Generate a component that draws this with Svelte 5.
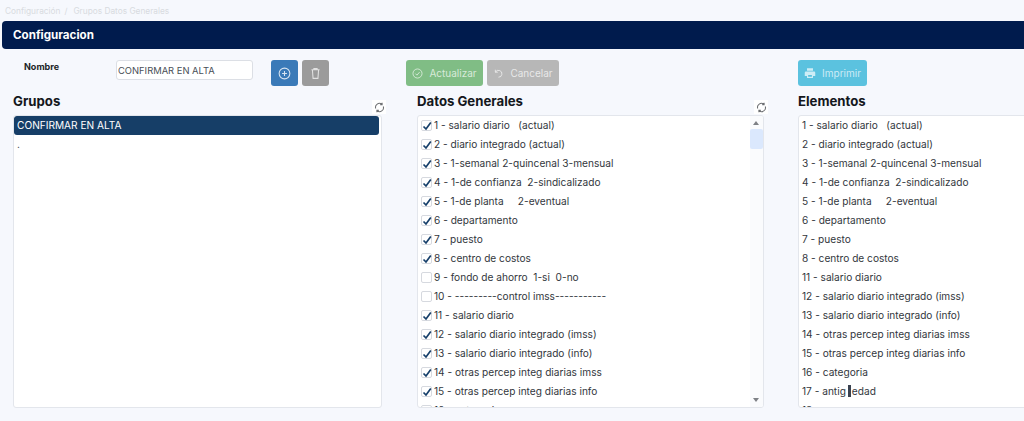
<script>
  const datos = [
    [1, 'salario diario \u00a0 (actual)', true],
    [2, 'diario integrado (actual)', true],
    [3, '1-semanal 2-quincenal 3-mensual', true],
    [4, '1-de confianza \u00a02-sindicalizado', true],
    [5, '1-de planta \u00a0 \u00a0 2-eventual', true],
    [6, 'departamento', true],
    [7, 'puesto', true],
    [8, 'centro de costos', true],
    [9, 'fondo de ahorro \u00a01-si \u00a00-no', false],
    [10, '---------control imss-----------', false],
    [11, 'salario diario', true],
    [12, 'salario diario integrado (imss)', true],
    [13, 'salario diario integrado (info)', true],
    [14, 'otras percep integ diarias imss', true],
    [15, 'otras percep integ diarias info', true],
    [16, 'categoria', false]
  ];
  const elementos = datos.filter((d) => d[2] || d[0] === 16).concat([[17, 'antig', true], [18, 'sexo', true]]);
</script>

<div class="page">
  <nav class="crumbs"><span>Configuración</span><span class="sep">/</span><span>Grupos Datos Generales</span></nav>
  <header class="bar">Configuracion</header>

  <div class="toolbar">
    <div class="form">
      <label class="name" for="nombre">Nombre</label>
      <input id="nombre" value="CONFIRMAR EN ALTA" />
      <button class="btn icon blue" aria-label="Agregar">
        <svg viewBox="0 0 16 16" width="13" height="13"><circle cx="8" cy="8" r="6.6" /><path d="M8 5v6M5 8h6" /></svg>
      </button>
      <button class="btn icon grey" aria-label="Eliminar">
        <svg viewBox="0 0 16 16" width="13" height="13"><path d="M3 3.500h10M6 3.500V2h4v1.500M4.200 3.500l.8 10.500h6l.8-10.500" /></svg>
      </button>
    </div>
    <div class="actions">
      <button class="btn green">
        <svg viewBox="0 0 16 16" width="11" height="11"><circle cx="8" cy="8" r="6.6" /><path d="M5 8.200l2.200 2.200L11 6" /></svg>
        Actualizar
      </button>
      <button class="btn silver">
        <svg viewBox="0 0 16 16" width="11" height="11"><path d="M3.400 2.500v3.600H7M3.600 6A5 5 0 1 1 8 13.400" /></svg>
        Cancelar
      </button>
    </div>
    <div class="actions">
      <button class="btn cyan">
        <svg class="solid" viewBox="0 0 16 16" width="12" height="12"><path d="M4 1.500h8v3.500H4zM2.500 6h11a1.500 1.500 0 0 1 1.500 1.500V12h-3v2.500H4V12H1V7.500A1.500 1.500 0 0 1 2.500 6zM5.500 10.500v2.500h5v-2.500z" /></svg>
        Imprimir
      </button>
    </div>
  </div>

  <div class="lists">
    <section>
      <div class="head">
        <h2>Grupos</h2>
        <span class="refresh">
          <svg viewBox="0 0 16 16" width="11" height="11"><path d="M2.500 9.500A5.700 5.700 0 0 1 11.500 3.300M13.500 6.500A5.700 5.700 0 0 1 4.500 12.700M11.800 1v2.800H9M4.200 15v-2.800H7" /></svg>
        </span>
      </div>
      <div class="box groups">
        <div class="selected">CONFIRMAR EN ALTA</div>
        <div class="dot">.</div>
      </div>
    </section>

    <section>
      <div class="head">
        <h2>Datos Generales</h2>
        <span class="refresh">
          <svg viewBox="0 0 16 16" width="11" height="11"><path d="M2.500 9.500A5.700 5.700 0 0 1 11.500 3.300M13.500 6.500A5.700 5.700 0 0 1 4.500 12.700M11.800 1v2.800H9M4.200 15v-2.800H7" /></svg>
        </span>
      </div>
      <div class="box checks">
        <div class="rows">
          {#each datos as d}
            <div class="row">
              <span class="check" class:on={d[2]}>
                {#if d[2]}<svg viewBox="0 0 10 10" width="10" height="10"><path d="M1.500 5.500L4 8l4.800-6.500" /></svg>{/if}
              </span><span class="txt">{d[0]} - {d[1]}</span>
            </div>
          {/each}
        </div>
        <div class="scroll">
          <span class="up"></span>
          <span class="thumb"></span>
          <span class="down"></span>
        </div>
      </div>
    </section>

    <section class="last">
      <div class="head"><h2>Elementos</h2></div>
      <div class="box plain">
        {#each elementos as e}
          <div class="row">
            {e[0]} - {e[1]}{#if e[0] === 17}<span class="bad"></span>edad{/if}
          </div>
        {/each}
      </div>
    </section>
  </div>
</div>

<style>
  :global(body) {
    margin: 0;
    background: #f6f8fd;
    font-family: Inter, "Liberation Sans", sans-serif;
    overflow: hidden;
  }
  .page {
    width: 1024px;
    height: 421px;
    overflow: hidden;
  }
  .crumbs {
    height: 21px;
    padding-left: 5px;
    display: flex;
    align-items: center;
    font-size: 8.300px;
    color: #d8dbe0;
    box-sizing: border-box;
  }
  .sep {
    margin: 0 6px 0 4px;
  }
  .bar {
    margin-left: 2px;
    height: 28px;
    background: #001b4d;
    border-radius: 4px 0 0 4px;
    color: #fff;
    font-size: 11.600px;
    font-weight: 700;
    line-height: 28px;
    padding-left: 11px;
    box-sizing: border-box;
  }
  .toolbar {
    display: grid;
    grid-template-columns: 393px 392px 200px;
    margin-top: 11px;
    height: 26px;
    padding-left: 13px;
  }
  .form {
    display: flex;
    align-items: flex-start;
  }
  .name {
    font-size: 9px;
    font-weight: 700;
    color: #1b1f27;
    width: 103px;
    padding: 1px 0 0 11px;
    box-sizing: border-box;
    line-height: 11px;
  }
  input {
    width: 137px;
    height: 20px;
    padding: 0 1px;
    box-sizing: border-box;
    border: 1px solid #dcdfe5;
    border-radius: 3px;
    background: #fff;
    font: 9.400px Inter, "Liberation Sans", sans-serif;
    color: #4a4f57;
    outline: none;
  }
  .btn {
    height: 26px;
    border: none;
    border-radius: 3px;
    display: inline-flex;
    align-items: center;
    justify-content: center;
    gap: 6px;
    color: rgba(255, 255, 255, 0.7);
    font: 10px Inter, "Liberation Sans", sans-serif;
    padding: 0;
  }
  .btn svg {
    fill: none;
    stroke: currentColor;
    stroke-width: 1.300;
    flex: none;
  }
  .btn svg.solid {
    fill: currentColor;
    stroke: none;
  }
  .icon {
    width: 27px;
    margin-left: 4px;
  }
  .form input + .icon {
    margin-left: 18px;
  }
  .blue { background: #3a7ab8; color: rgba(255, 255, 255, 0.8); }
  .grey { background: #9b9b9b; }
  .green { background: #80bd85; width: 77px; }
  .silver { background: #b7b7b7; width: 72px; margin-left: 4px; }
  .cyan { background: #5bc2df; width: 69px; }
  .actions {
    display: flex;
    align-items: flex-start;
  }
  .lists {
    display: grid;
    grid-template-columns: 404px 381px 260px;
    padding-left: 13px;
    margin-top: 2px;
  }
  section {
    padding-right: 35px;
    box-sizing: border-box;
  }
  section + section {
    padding-right: 34px;
  }
  section.last {
    padding-right: 0;
  }
  .head {
    height: 27px;
    position: relative;
    display: flex;
    align-items: flex-end;
  }
  h2 {
    margin: 0;
    font-size: 13.200px;
    font-weight: 700;
    line-height: 27px;
    color: #14171c;
  }
  .refresh {
    position: absolute;
    right: -4px;
    top: 12px;
    width: 14px;
    height: 14px;
    display: flex;
    align-items: center;
    justify-content: center;
    background: #fff;
  }
  .refresh svg {
    fill: none;
    stroke: #6d6f72;
    stroke-width: 1.500;
  }
  .box {
    height: 293px;
    background: #fff;
    border: 1px solid #e3e6ec;
    border-radius: 3px;
    box-sizing: border-box;
    overflow: hidden;
    font-size: 10.150px;
    color: #33373d;
  }
  .selected {
    background: #163e67;
    color: #fff;
    height: 19px;
    line-height: 19px;
    padding-left: 3px;
    border-radius: 3px;
    margin-right: 2px;
  }
  .dot {
    padding-left: 3px;
    line-height: 19px;
    color: #33373d;
  }
  .checks {
    display: flex;
  }
  .rows {
    flex: 1;
    min-width: 0;
    overflow: hidden;
  }
  .row {
    height: 19px;
    line-height: 19px;
    padding-left: 3px;
    display: block;
  }
  .checks .row {
    display: flex;
    align-items: center;
  }
  .check {
    width: 11px;
    height: 11px;
    box-sizing: border-box;
    border: 1px solid #d6d9df;
    border-radius: 2px;
    background: #fff;
    margin-right: 2px;
    display: inline-flex;
    flex: none;
  }
  .check svg {
    fill: none;
    stroke: #17406b;
    stroke-width: 1.700;
    flex: none;
  }
  .scroll {
    width: 13px;
    flex: none;
    background: #fafbfd;
    position: relative;
    box-sizing: border-box;
  }
  .up, .down {
    position: absolute;
    left: 3px;
    width: 0;
    height: 0;
    border-left: 3.500px solid transparent;
    border-right: 3.500px solid transparent;
  }
  .up { top: 5px; border-bottom: 4px solid #7e8186; }
  .down { bottom: 5px; border-top: 4px solid #7e8186; }
  .thumb {
    position: absolute;
    top: 13px;
    left: 0;
    right: 0;
    height: 20px;
    background: #dbe8fd;
    border-radius: 2px;
  }
  .bad {
    display: inline-block;
    width: 3px;
    height: 12px;
    background: #3a4250;
    vertical-align: -2px;
    margin: 0 1px 0 2px;
  }
</style>
